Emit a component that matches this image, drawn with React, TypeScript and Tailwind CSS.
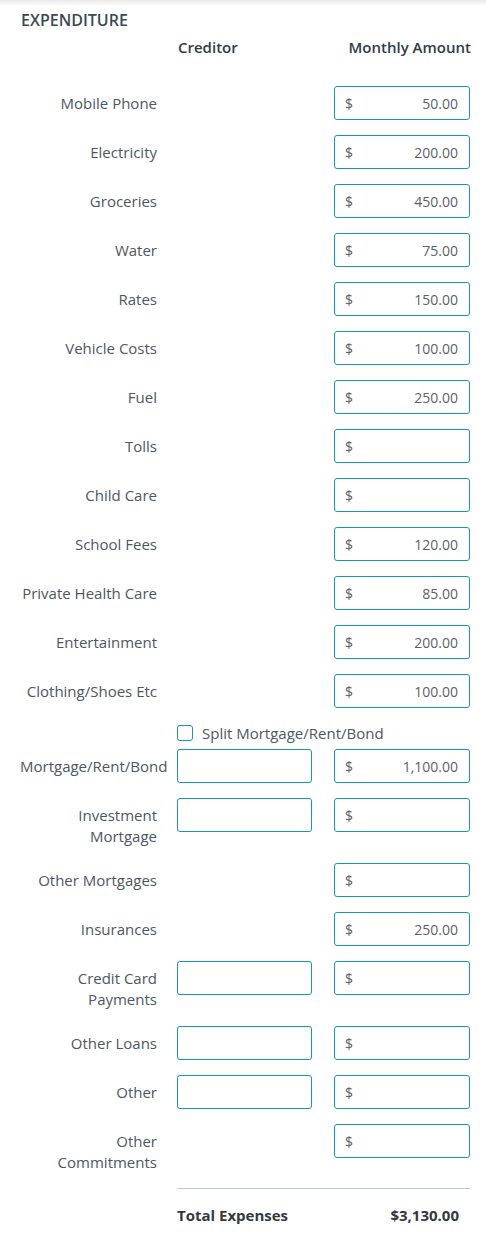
import React from "react";

type Row = {
  label: string;
  value?: string;
  creditor?: boolean;
  nowrap?: boolean;
};

const topRows: Row[] = [
  { label: "Mobile Phone", value: "50.00" },
  { label: "Electricity", value: "200.00" },
  { label: "Groceries", value: "450.00" },
  { label: "Water", value: "75.00" },
  { label: "Rates", value: "150.00" },
  { label: "Vehicle Costs", value: "100.00" },
  { label: "Fuel", value: "250.00" },
  { label: "Tolls" },
  { label: "Child Care" },
  { label: "School Fees", value: "120.00" },
  { label: "Private Health Care", value: "85.00" },
  { label: "Entertainment", value: "200.00" },
  { label: "Clothing/Shoes Etc", value: "100.00" },
];

const bottomRows: Row[] = [
  { label: "Mortgage/Rent/Bond", value: "1,100.00", creditor: true, nowrap: true },
  { label: "Investment Mortgage", creditor: true },
  { label: "Other Mortgages" },
  { label: "Insurances", value: "250.00" },
  { label: "Credit Card Payments", creditor: true },
  { label: "Other Loans", creditor: true },
  { label: "Other", creditor: true },
  { label: "Other Commitments" },
];

function AmountBox({ value }: { value?: string }) {
  return (
    <div className="w-[136px] h-[34px] shrink-0 border border-[#1797b8] rounded-[3px] bg-white flex items-center justify-between pl-[10px] pr-[11px] text-[14px] text-[#5a6168]">
      <span>$</span>
      <span>{value ?? ""}</span>
    </div>
  );
}

function FormRow({ row, last }: { row: Row; last?: boolean }) {
  return (
    <div className={`flex items-start ${last ? "mb-[14px]" : "mb-[15px]"}`}>
      <div
        className={`w-[137px] shrink-0 text-right text-[15px] leading-[21px] pt-[7px] pb-[1px] text-[#4b5861] ${
          row.nowrap ? "whitespace-nowrap" : ""
        }`}
      >
        {row.label}
      </div>
      <div className="w-[20px] shrink-0" />
      {row.creditor ? (
        <div className="w-[135px] h-[34px] shrink-0 border border-[#1797b8] rounded-[3px] bg-white" />
      ) : (
        <div className="w-[135px] shrink-0" />
      )}
      <div className="w-[22px] shrink-0" />
      <AmountBox value={row.value} />
    </div>
  );
}

export default function App() {
  return (
    <div
      className="w-[486px] min-h-[1247px] bg-white"
      style={{ fontFamily: '"Open Sans", "Liberation Sans", sans-serif' }}
    >
      <div className="h-[6px] bg-linear-to-b from-[#ebebeb] to-white" />
      <div className="pl-[20px]">
        <div className="pt-[4px] text-[16px] leading-[21px] font-semibold text-[#3a4a53] pl-[1px]">
          EXPENDITURE
        </div>
        <div className="mt-[6px] flex text-[15px] leading-[21px] font-semibold text-[#2e3d46]">
          <div className="w-[157px] shrink-0" />
          <div className="w-[135px] shrink-0 pl-[1px]">Creditor</div>
          <div className="w-[159px] shrink-0 text-right">Monthly Amount</div>
        </div>
        <div className="mt-[28px]">
          {topRows.map((r) => (
            <FormRow key={r.label} row={r} />
          ))}
          <div className="flex items-center h-[20px] mb-[6px]">
            <div className="w-[157px] shrink-0" />
            <div className="w-[16px] h-[16px] border border-[#1797b8] rounded-[3px] bg-white shrink-0" />
            <span className="ml-[9px] text-[15px] leading-[20px] text-[#4b5861]">
              Split Mortgage/Rent/Bond
            </span>
          </div>
          {bottomRows.map((r, i) => (
            <FormRow key={r.label} row={r} last={i === bottomRows.length - 1} />
          ))}
        </div>
        <div className="flex">
          <div className="w-[157px] shrink-0" />
          <div className="w-[293px] shrink-0">
            <div className="h-px bg-[#bcc8cb]" />
            <div className="pt-[16px] flex justify-between pr-[11px] text-[15px] leading-[20px] font-bold text-[#333a3f]">
              <span>Total Expenses</span>
              <span>$3,130.00</span>
            </div>
          </div>
        </div>
      </div>
    </div>
  );
}
